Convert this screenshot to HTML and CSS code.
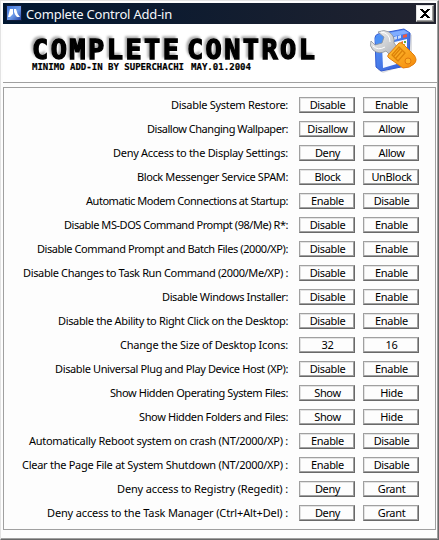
FILE: index.html
```html
<!DOCTYPE html>
<html lang="en">
<head>
<meta charset="utf-8">
<title>Complete Control Add-in</title>
<link rel="stylesheet" href="styles.css">
</head>
<body>
<div class="window">
  <div class="titlebar">
    <svg class="app-icon" width="16" height="16" viewBox="0 0 16 16">
      <defs><linearGradient id="app" x1="0" y1="0" x2="1" y2="1"><stop stop-color="#3c73d8"/><stop offset=".55" stop-color="#6e9be8"/><stop offset="1" stop-color="#2343a5"/></linearGradient></defs>
      <path fill="#111b38" d="M0 0h16v16H0z"/><path fill="url(#app)" d="M1 1h14v14H1z"/>
      <path fill="#fff" d="M2 12L4 4h3v5l-3 3zM8 4h2q1 5 4 8h-3Q9 10 8 7z"/>
    </svg>
    <span class="title">Complete Control Add-in</span>
    <button class="close" aria-label="Close"><svg width="10" height="9" viewBox="0 0 10 9" shape-rendering="crispEdges"><path d="M0 0h3v1h1v1h2V1h1V0h3v1H9v1H8v1H7v1H6v1h1v1h1v1h1v1h1v1H7V8H6V7H4v1H3v1H0V8h1V7h1V6h1V5h1V4H3V3H2V2H1V1H0z"/></svg></button>
  </div>
  <header class="banner">
    <svg class="logo" width="300" height="44" viewBox="0 0 300 44">
      <g class="wordmark">
        <text x="4" y="28.5" textLength="147" lengthAdjust="spacing">COMPLETE</text>
        <text x="159" y="28.5" textLength="128" lengthAdjust="spacing">CONTROL</text>
      </g>
      <g class="byline">
        <text x="4" y="39.5" textLength="152" lengthAdjust="spacingAndGlyphs">MINIMO ADD-IN BY SUPERCHACHI</text>
        <text x="163" y="39.5" textLength="60" lengthAdjust="spacingAndGlyphs">MAY.01.2004</text>
      </g>
    </svg>
    <svg class="tools" width="50" height="48" viewBox="0 0 50 48">
      <defs>
        <linearGradient id="steel" x1="0" y1="0" x2="1" y2="1"><stop stop-color="#fafafa"/><stop offset="1" stop-color="#a9adb2"/></linearGradient>
        <linearGradient id="blue" x1="0" y1="0" x2="1" y2="1"><stop stop-color="#5b9bff"/><stop offset="1" stop-color="#3158cf"/></linearGradient>
        <linearGradient id="gold" x1="0" y1="0" x2="1" y2="1"><stop stop-color="#ffc338"/><stop offset="1" stop-color="#f58a09"/></linearGradient>
      </defs>
      <path fill="#8f929b" opacity=".3" d="M9 13l31-8 3 2v28l-29 10-5-3z"/>
      <path fill="url(#blue)" stroke="#345bd0" d="M6 10q0-3 3-4l26-5 6 4-1 29q0 3-3 4l-25 5-5-4z"/>
      <path fill="#80adff" d="M9 7l26-5 5 3-28 6z"/>
      <path fill="#f7faff" d="M13 17l25-6v22l-24 7z"/>
      <path fill="#c9dafa" d="M25 9l3-1v3l-3 1zM29 8l3-1v3l-3 1z"/>
      <path fill="#ed5843" d="M34 7l4-1v3l-4 1z"/>
      <path fill="#ef742c" d="M32 14l2-1v3h-2z"/><path fill="#62aa45" d="M35 13h2v2h-2z"/><path fill="#e9b719" d="M34 16h2v2h-2z"/>
      <circle cx="11" cy="12" r="5" fill="#4d91f5"/>
      <path fill="url(#steel)" stroke="#8a8f96" stroke-width=".8" d="M9 4Q15 1 20 4Q26 8 25 15L29 20 22 28 17 23Q10 27 4 22Q0 18 2 13L6 17 13 15 15 9z"/>
      <path fill="none" stroke="#fff" d="M12 4q9 1 9 10M4 18q5 5 12 1"/>
      <path fill="url(#gold)" stroke="#e17b0c" d="M19 27L30 15q2-1 4 1L45 27q4 5 0 9t-11 4L20 30q-2-1-1-3z"/>
      <path fill="none" stroke="#dc8209" stroke-width="1.3" d="M23 27l7-8 6 6-7 8zM25 28l6-7M27 30l6-7"/>
      <circle cx="39" cy="33" r="3" fill="#ffb22a" stroke="#df780c"/>
    </svg>
  </header>
  <main class="panel" id="settings"></main>
</div>
<script src="settings.js"></script>
</body>
</html>
```
FILE: styles.css
```css
* { box-sizing: border-box; }
body { margin: 0; background: #fff; }
.window {
  width: 439px; height: 540px; padding: 2px 1px 0 2px;
  background: #fdfdfd; color: #000;
  border: 1px solid; border-color: #e3e3e3 #696969 #696969 #e3e3e3;
  box-shadow: inset -1px -1px #a0a0a0;
  font-family: "Noto Sans", sans-serif;
}
.titlebar {
  height: 21px; width: 433px; display: flex; align-items: center;
  padding: 0 2px 0 3px; background: linear-gradient(90deg, #001630, #22232f);
}
.app-icon { margin-top: -1px; }
.title { color: #f4f7fa; font-size: 13px; line-height: 20px; margin-left: 4px; white-space: nowrap; letter-spacing: -.2px; }
.close {
  width: 18px; height: 17px; margin-left: auto; padding: 0;
  display: flex; align-items: center; justify-content: center;
  background: #fdfdfd; border: 1px solid; border-color: #e3e3e3 #696969 #696969 #e3e3e3;
  box-shadow: inset -1px -1px #a0a0a0;
}
.banner {
  height: 59px; width: 434px; background: #fff; border-bottom: 1px solid #a0a0a0;
  display: flex; justify-content: space-between; padding: 4px 18px 0 25px;
}
.logo { margin-top: 2px; overflow: visible; }
.wordmark {
  font: bold 27px "DejaVu Sans Mono", monospace;
  stroke: #000; stroke-width: 1.3px; stroke-linejoin: miter;
  filter: drop-shadow(-1.5px -1.5px 1px #aaa);
}
.byline { font: bold 9px "DejaVu Sans Mono", monospace; stroke: #000; stroke-width: .2px; }
.panel {
  width: 433px; height: 443px; margin-top: 4px; border: 1px solid #a0a0a0;
  padding: 5px 16px 0 0;
}
.row { height: 24px; display: flex; align-items: center; justify-content: flex-end; }
.label { font-size: 11px; line-height: 16px; white-space: nowrap; margin-right: 11px; }
.btn {
  width: 56px; height: 16px; padding: 0 0 1px 1px; margin-right: 8px;
  font: 11px/13px "Noto Sans", sans-serif; letter-spacing: -.35px; color: #000; background: #fdfdfd;
  border: 1px solid; border-color: #a0a0a0 #696969 #696969 #a0a0a0;
  box-shadow: inset -1px -1px #a0a0a0, inset 1px 1px #e3e3e3;
}
.btn:last-child { margin-right: 0; }
```
FILE: settings.js
```js
// label, label width in px, first action, second action
const settings = [
  ["Disable System Restore:", 117, "Disable", "Enable"],
  ["Disallow Changing Wallpaper:", 141, "Disallow", "Allow"],
  ["Deny Access to the Display Settings:", 175, "Deny", "Allow"],
  ["Block Messenger Service SPAM:", 151, "Block", "UnBlock"],
  ["Automatic Modem Connections at Startup:", 202, "Enable", "Disable"],
  ["Disable MS-DOS Command Prompt (98/Me) R*:", 224, "Disable", "Enable"],
  ["Disable Command Prompt and Batch Files (2000/XP):", 251, "Disable", "Enable"],
  ["Disable Changes to Task Run Command (2000/Me/XP) :", 265, "Disable", "Enable"],
  ["Disable Windows Installer:", 126, "Disable", "Enable"],
  ["Disable the Ability to Right Click on the Desktop:", 230, "Disable", "Enable"],
  ["Change the Size of Desktop Icons:", 168, "32", "16"],
  ["Disable Universal Plug and Play Device Host (XP):", 233, "Disable", "Enable"],
  ["Show Hidden Operating System Files:", 178, "Show", "Hide"],
  ["Show Hidden Folders and Files:", 149, "Show", "Hide"],
  ["Automatically Reboot system on crash (NT/2000/XP) :", 259, "Enable", "Disable"],
  ["Clear the Page File at System Shutdown (NT/2000/XP) :", 266, "Enable", "Disable"],
  ["Deny access to Registry (Regedit) :", 171, "Deny", "Grant"],
  ["Deny access to the Task Manager (Ctrl+Alt+Del) :", 241, "Deny", "Grant"]
];
const panel = document.getElementById("settings");
for (const [text, width, first, second] of settings) {
  const row = document.createElement("div");
  row.className = "row";
  const label = document.createElement("span");
  label.className = "label";
  label.textContent = text;
  row.append(label);
  for (const action of [first, second]) {
    const button = document.createElement("button");
    button.className = "btn";
    button.textContent = action;
    row.append(button);
  }
  panel.append(row);
  const natural = label.getBoundingClientRect().width;
  label.style.letterSpacing = (width - natural) / text.length + "px";
}
```
